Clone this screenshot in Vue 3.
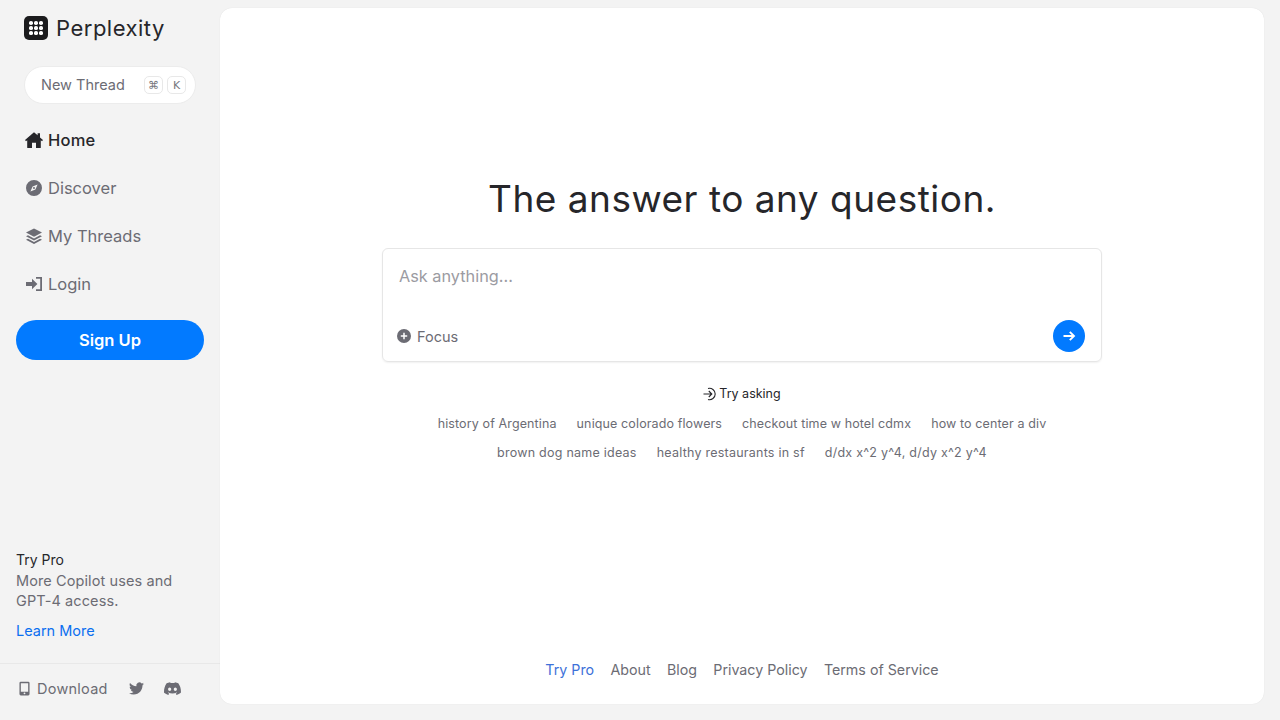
<script setup>
const nav = [
  { label: 'Home', icon: 'home', active: true },
  { label: 'Discover', icon: 'compass' },
  { label: 'My Threads', icon: 'layers' },
  { label: 'Login', icon: 'login' },
]
const row1 = ['history of Argentina', 'unique colorado flowers', 'checkout time w hotel cdmx', 'how to center a div']
const row2 = ['brown dog name ideas', 'healthy restaurants in sf', 'd/dx x^2 y^4, d/dy x^2 y^4']
const links = ['About', 'Blog', 'Privacy Policy', 'Terms of Service']
</script>

<template>
  <div class="app">
    <aside class="side">
      <div class="brand">
        <span class="logo"><i v-for="n in 9" :key="n"></i></span>
        <span class="brand-name">Perplexity</span>
      </div>
      <button class="new-thread">
        <span>New Thread</span>
        <span class="keys"><kbd>⌘</kbd><kbd>K</kbd></span>
      </button>
      <nav class="nav">
        <a v-for="item in nav" :key="item.label" class="nav-item" :class="{ active: item.active }">
          <svg class="nav-icon" viewBox="0 0 18 18" fill="currentColor">
            <path v-if="item.icon === 'home'" d="M9 1.200 0 9l1 1.200 1.200-1V16.400a.6.6 0 0 0 .6.6h4.200v-5.200h4V17h4.200a.6.6 0 0 0 .6-.6V9.200l1.200 1L18 9l-3-2.600V2.200h-2.400v2.100z" />
            <g v-else-if="item.icon === 'compass'">
              <path fill-rule="evenodd" d="M9 1a8 8 0 1 1 0 16A8 8 0 0 1 9 1zm3.600 4.400L7.600 7.600 5.400 12.600l5-2.200zM9 8a1 1 0 1 1 0 2 1 1 0 0 1 0-2z" />
            </g>
            <g v-else-if="item.icon === 'layers'">
              <path d="M9 1.400 17 5.600 9 9.800 1 5.600z" />
              <path d="M3 8.200 9 11.400l6-3.200L17 9.200 9 13.400 1 9.200z" />
              <path d="M3 11.800 9 15l6-3.200 2 1-8 4.200-8-4.200z" />
            </g>
            <g v-else>
              <path d="M1 7h6V3.800L12.400 9 7 14.200V11H1z" />
              <path d="M11 2h6v14h-6v-1.700h4.200V3.700H11z" />
            </g>
          </svg>
          <span>{{ item.label }}</span>
        </a>
      </nav>
      <button class="signup">Sign Up</button>
      <div class="promo">
        <div class="promo-title">Try Pro</div>
        <p class="promo-text">More Copilot uses and GPT-4 access.</p>
        <a class="promo-link">Learn More</a>
      </div>
      <div class="side-foot">
        <svg class="foot-icon phone" viewBox="0 0 12 16" fill="currentColor">
          <path fill-rule="evenodd" d="M2 .5h8A1.500 1.500 0 0 1 11.500 2v12a1.500 1.500 0 0 1-1.500 1.500H2A1.500 1.500 0 0 1 .5 14V2A1.500 1.500 0 0 1 2 .5zm0 1.700V11.500h8V2.200zM6 12.300a1 1 0 1 0 0 2 1 1 0 0 0 0-2z" />
        </svg>
        <span class="download">Download</span>
        <svg class="foot-icon twitter" viewBox="0 0 24 24" fill="currentColor">
          <path d="M23.950 4.570a10 10 0 0 1-2.820.770 4.960 4.960 0 0 0 2.160-2.720c-.950.550-2 .950-3.130 1.180a4.920 4.920 0 0 0-8.380 4.480C7.690 8.100 4.070 6.130 1.640 3.160a4.820 4.820 0 0 0-.67 2.480c0 1.710.870 3.210 2.190 4.100a4.900 4.900 0 0 1-2.230-.620v.060a4.920 4.920 0 0 0 3.950 4.830 5 5 0 0 1-2.210.080 4.940 4.940 0 0 0 4.600 3.420A9.870 9.870 0 0 1 0 19.540a14 14 0 0 0 7.560 2.210c9.050 0 14-7.500 14-13.980 0-.210 0-.420-.020-.630a9.940 9.940 0 0 0 2.410-2.570z" />
        </svg>
        <svg class="foot-icon discord" viewBox="0 0 24 18" fill="currentColor">
          <path d="M20.300 1.500A19.800 19.800 0 0 0 15.400 0l-.6 1.300a18.400 18.400 0 0 0-5.500 0L8.600 0a19.700 19.700 0 0 0-4.900 1.500C.6 6.100-.3 10.700.1 15.100a19.900 19.900 0 0 0 6 3l1.300-2.100c-.7-.3-1.400-.6-2-1l.5-.4a14.200 14.200 0 0 0 12.100 0l.5.400c-.6.400-1.300.7-2 1l1.300 2.100a19.800 19.800 0 0 0 6-3c.5-5.100-.8-9.600-3.600-13.600zM8 12.400c-1.200 0-2.200-1.100-2.200-2.400S6.800 7.600 8 7.600s2.200 1.100 2.200 2.400-1 2.400-2.200 2.400zm8 0c-1.200 0-2.200-1.100-2.200-2.400s1-2.400 2.200-2.400 2.200 1.100 2.200 2.400-1 2.400-2.200 2.400z" />
        </svg>
      </div>
    </aside>

    <main class="card">
      <section class="center">
        <h1>The answer to any question.</h1>
        <div class="ask">
          <div class="placeholder">Ask anything...</div>
          <div class="ask-row">
            <span class="focus">
              <svg viewBox="0 0 14 14" class="focus-icon"><circle cx="7" cy="7" r="7" fill="currentColor" /><path d="M7 3.800v6.400M3.800 7h6.400" stroke="#fff" stroke-width="1.500" /></svg>
              Focus
            </span>
            <span class="go">
              <svg viewBox="0 0 14 14" fill="none" stroke="#fff" stroke-width="1.900"><path d="M1.500 7h10.500M7.800 2.800 12 7l-4.200 4.200" /></svg>
            </span>
          </div>
        </div>
        <div class="try">
          <svg viewBox="0 0 14 14" fill="none" stroke="currentColor" stroke-width="1.100"><path d="M.5 7h8M5.800 4 8.800 7l-3 3" /><path d="M5 1.500a5.700 5.700 0 1 1 0 11" /></svg>
          Try asking
        </div>
        <div class="chips"><span v-for="c in row1" :key="c">{{ c }}</span></div>
        <div class="chips wide"><span v-for="c in row2" :key="c">{{ c }}</span></div>
      </section>
      <footer class="foot">
        <a class="pro">Try Pro</a>
        <a v-for="l in links" :key="l">{{ l }}</a>
      </footer>
    </main>
  </div>
</template>

<style>
html, body { margin: 0; background: #f3f3f3; }
</style>

<style scoped>
.app {
  display: flex;
  width: 1280px;
  height: 720px;
  background: #f3f3f3;
  font-family: Inter, "Liberation Sans", sans-serif;
  color: #6c6c74;
  overflow: hidden;
}
.side {
  width: 220px;
  flex: none;
  display: flex;
  flex-direction: column;
  box-sizing: border-box;
}
.brand { display: flex; align-items: center; gap: 8px; padding: 16px 0 0 24px; height: 24px; }
.logo {
  width: 24px; height: 24px; box-sizing: border-box; padding: 5px;
  border-radius: 5px; background: #1b1b1d;
  display: grid; grid-template-columns: repeat(3, 1fr); gap: 1.500px;
}
.logo i { background: #fff; border-radius: 50%; }
.brand-name { font-size: 22px; letter-spacing: .5px; color: #26262a; }
.new-thread {
  margin: 26px 0 0 24px; width: 172px; height: 38px; box-sizing: border-box;
  display: flex; align-items: center; justify-content: space-between;
  padding: 0 9px 2px 16px; border: 1px solid #ececec; border-radius: 19px; background: #fff;
  font: inherit; font-size: 14.500px; color: #6c6c74;
}
.keys { display: flex; gap: 4px; position: relative; top: 1px; }
kbd {
  width: 19px; height: 18px; box-sizing: border-box; border: 1px solid #e8e8e8; border-radius: 5px;
  display: flex; align-items: center; justify-content: center; font: 11px "DejaVu Sans", sans-serif; color: #77777e;
}
.nav { display: flex; flex-direction: column; margin-top: 12px; }
.nav-item { display: flex; align-items: center; gap: 5px; height: 48px; padding-left: 25px; font-size: 16.500px; }
.nav-item.active { color: #26262a; font-weight: 500; letter-spacing: .2px; }
.nav-icon { width: 18px; height: 18px; flex: none; }
.signup {
  margin: 12px 0 0 16px; width: 188px; height: 40px; border: 0; border-radius: 20px;
  background: #027aff; color: #fff; font: inherit; font-size: 16.500px; font-weight: 600;
}
.promo { margin-top: auto; padding: 0 16px; font-size: 14.500px; line-height: 20px; }
.promo-title { color: #26262a; font-size: 14px; }
.promo-text { margin: 1px 0 0; width: 175px; letter-spacing: .1px; }
.promo-link { display: block; margin-top: 10px; color: #0b6ff0; }
.side-foot {
  margin-top: 22px; height: 57px; box-sizing: border-box; border-top: 1px solid #e8e8e8;
  display: flex; align-items: center; padding: 0 0 8px 19px; font-size: 14.500px;
}
.foot-icon { flex: none; }
.phone { width: 11px; height: 15px; }
.download { margin-left: 7px; letter-spacing: .25px; }
.twitter { width: 15px; height: 15px; margin-left: 21px; }
.discord { width: 17px; height: 13px; margin-left: 20px; }
.card {
  flex: 1; margin: 8px 16px 16px 0; background: #fff; border-radius: 12px;
  box-shadow: 0 0 1px rgba(0,0,0,.12);
  display: flex; flex-direction: column; align-items: center; position: relative;
}
.center { display: flex; flex-direction: column; align-items: center; margin-top: 167px; }
h1 { margin: 0; font-size: 37px; line-height: 48px; font-weight: 400; color: #26262a; letter-spacing: .5px; white-space: nowrap; }
.ask {
  width: 720px; height: 114px; margin-top: 25px; box-sizing: border-box;
  border: 1px solid #e6e6e6; border-radius: 6px; box-shadow: 0 1px 2px rgba(0,0,0,.06);
  display: flex; flex-direction: column; padding: 15px 16px 9px 14px;
}
.placeholder { font-size: 16.300px; line-height: 24px; color: #9b9ba2; padding-left: 2px; }
.ask-row { margin-top: auto; display: flex; justify-content: space-between; align-items: center; }
.focus { display: flex; align-items: center; gap: 6px; font-size: 14.500px; }
.focus-icon { width: 14px; height: 14px; }
.go { width: 32px; height: 32px; border-radius: 50%; background: #027aff; display: flex; align-items: center; justify-content: center; }
.go svg { width: 14px; height: 14px; }
.try { display: flex; align-items: center; gap: 2px; margin: 24px 0 2px; font-size: 12.500px; line-height: 16px; color: #26262a; }
.try svg { width: 14px; height: 14px; }
.chips { display: flex; justify-content: center; gap: 20px; font-size: 12.500px; letter-spacing: .12px; line-height: 18px; margin-top: 11px; white-space: nowrap; }
.chips.wide { letter-spacing: .24px; }
.foot { margin-top: auto; display: flex; gap: 16.300px; padding-bottom: 24px; font-size: 14.250px; line-height: 20px; }
.pro { color: #3d71d9; }
</style>
